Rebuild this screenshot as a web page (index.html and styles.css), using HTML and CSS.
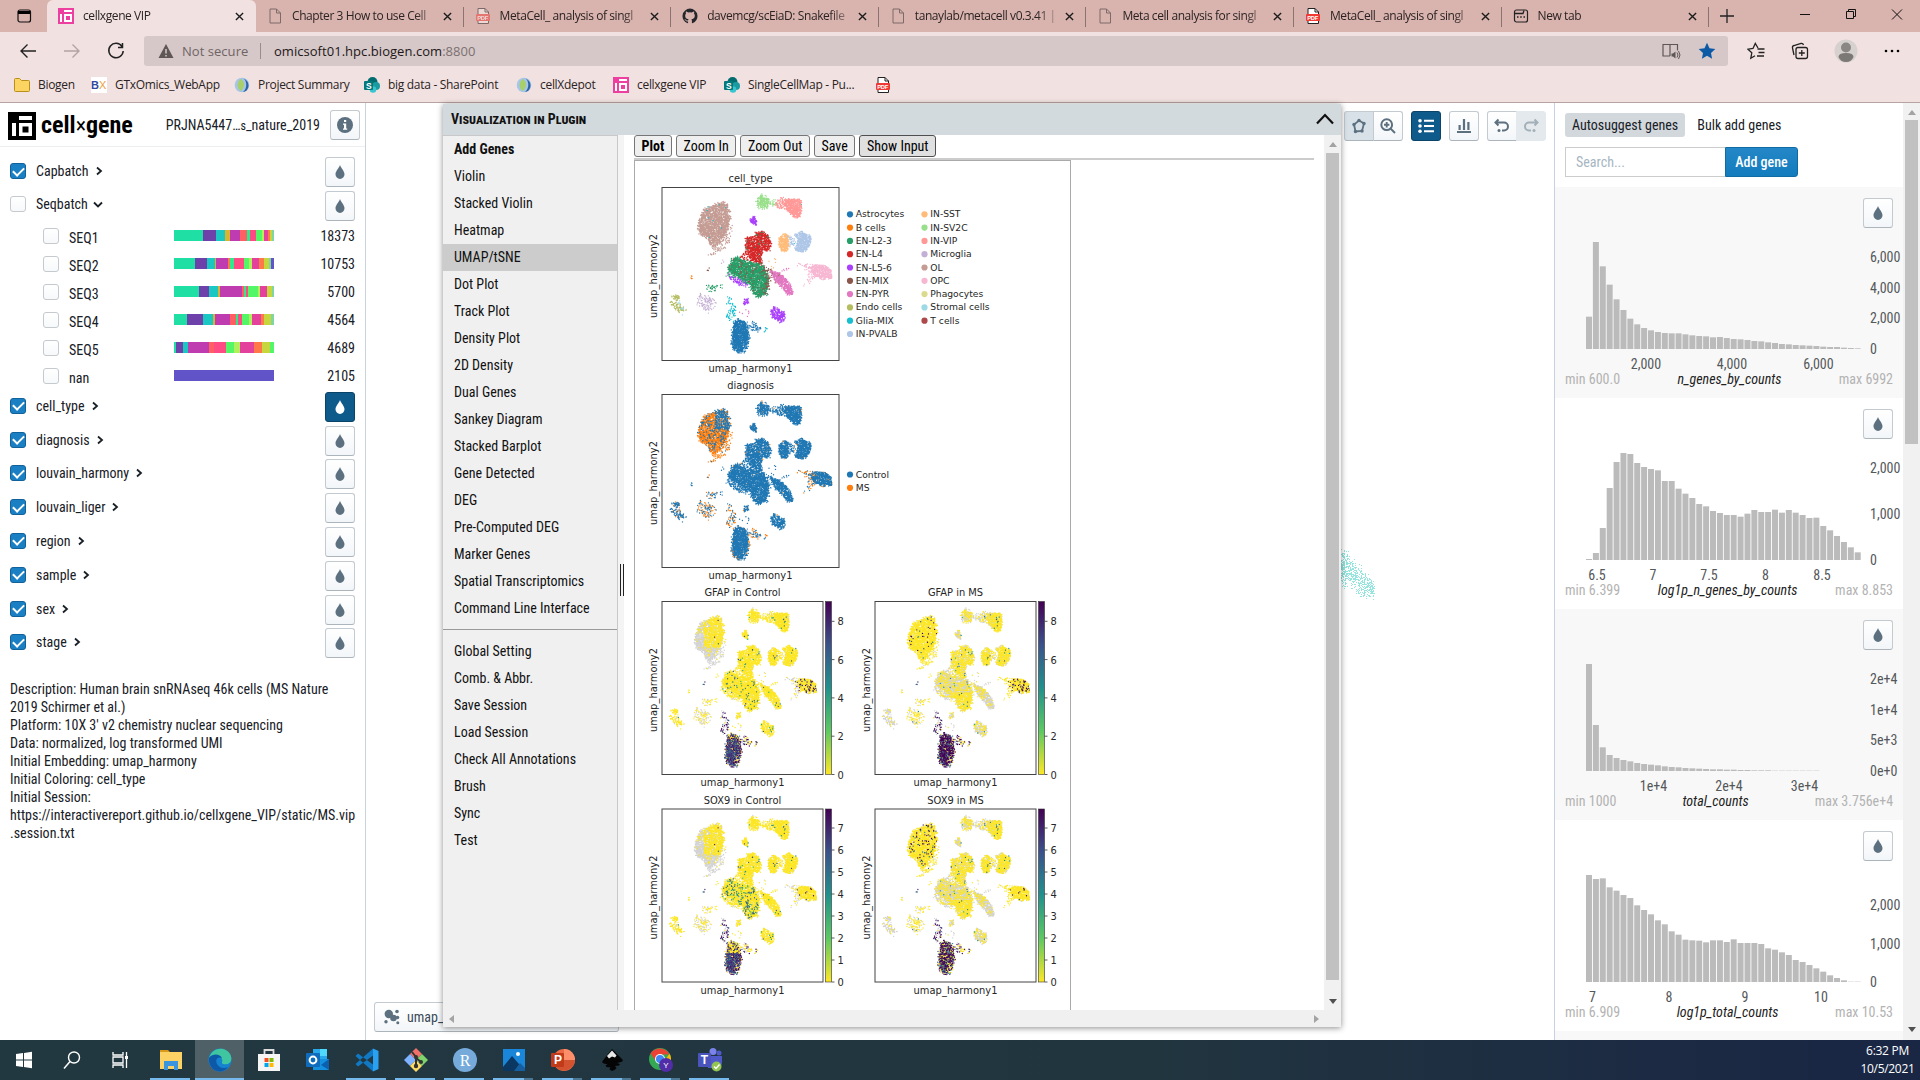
FILE: index.html
```html
<!DOCTYPE html>
<html lang="en">
<head>
<meta charset="utf-8">
<title>cellxgene VIP</title>
<link rel="stylesheet" href="styles.css">
</head>
<body>
<svg class="defs" aria-hidden="true">
  <symbol id="close" viewBox="0 0 10 10"><path d="M1 1l8 8M9 1l-8 8" stroke="#1b1b1b" stroke-width="1.500" fill="none"/></symbol>
  <symbol id="page" viewBox="0 0 16 16"><path d="M3 1h6.500l4 4v10h-10.500zM9.500 1v4h4" stroke="#7d6b69" fill="none"/></symbol>
  <symbol id="pdf" viewBox="0 0 16 16"><path d="M3 .5h7l3.500 3.500v11.500h-10.500z" fill="#fff" stroke="#222"/><path d="M10 .5v3.500h3.500" fill="none" stroke="#222"/><rect x="1" y="6" width="14" height="7" rx="1" fill="#ef3a35"/><text x="2.200" y="11.700" font-size="5.800" font-weight="700" fill="#fff" font-family="Liberation Sans, sans-serif">PDF</text></symbol>
  <symbol id="vip" viewBox="0 0 16 16"><path fill="#ec3fa0" d="M0 0h16v16h-16z"/><path fill="#fff" d="M2 6h2v8h-2zM6 2h8v2h-8zM6 6h8v8h-8z"/><path fill="#ec3fa0" d="M8 8h4v4h-4z"/></symbol>
  <symbol id="globe" viewBox="0 0 16 16"><circle cx="8" cy="8" r="7.300" fill="#a5c6e6"/><path d="M8 1c5 1 6 10 1 14 7-1 8-12-1-14z" fill="#2d62a3"/><path d="M7 2c4 3 4 8 0 12-4-2-5-9 0-12z" fill="#a9cf6b"/></symbol>
  <symbol id="share" viewBox="0 0 16 16"><circle cx="8.500" cy="5" r="5" fill="#036c70"/><circle cx="12" cy="9" r="4" fill="#1a9ba1"/><circle cx="9" cy="12.500" r="3.300" fill="#37c6d0"/><rect y="4" width="9" height="9" rx="1" fill="#03787c"/><text x="2" y="11.500" font-size="8.500" font-weight="700" fill="#fff" font-family="Liberation Sans, sans-serif">S</text></symbol>
  <symbol id="tint" viewBox="0 0 16 16"><path d="M8 1C7 4 3.500 7 3.500 10.300a4.500 4.700 0 0 0 9 0C12.500 7 9 4 8 1z"/></symbol>
  <symbol id="right" viewBox="0 0 16 16"><path d="M6 4.500l4 3.500-4 3.500" stroke="#182026" stroke-width="1.800" fill="none"/></symbol>
  <symbol id="down" viewBox="0 0 16 16"><path d="M4 6.500l4 4 4-4" stroke="#182026" stroke-width="1.800" fill="none"/></symbol>
</svg>

<header class="browser">
  <div class="tabs">
    <div class="tab-menu"><svg width="16" height="16" viewBox="0 0 16 16"><rect x="2" y="2" width="12.500" height="12" rx="2" fill="none" stroke="#111" stroke-width="1.200"/><path d="M2 3h12v3h-12z"/></svg></div>
    <div class="tab active"><svg class="ico"><use href="#vip"/></svg><span>cellxgene VIP</span><svg class="x"><use href="#close"/></svg></div>
    <div class="tab"><svg class="ico"><use href="#page"/></svg><span>Chapter 3 How to use Cell</span><svg class="x"><use href="#close"/></svg></div>
    <div class="tab"><svg class="ico faded"><use href="#pdf"/></svg><span>MetaCell_ analysis of singl</span><svg class="x"><use href="#close"/></svg></div>
    <div class="tab"><svg class="ico" viewBox="0 0 16 16"><path d="M8 .6a7.500 7.500 0 0 0-2.400 14.600c.4 0 .5-.2.500-.4v-1.400c-2 .5-2.500-.9-2.500-.9-.4-.9-.9-1.100-.9-1.100-.7-.5 0-.5 0-.5.8 0 1.200.8 1.200.8.700 1.200 1.800.8 2.200.6 0-.5.300-.8.500-1-1.700-.2-3.400-.8-3.400-3.700 0-.8.300-1.500.8-2-.1-.2-.4-1 0-2 0 0 .7-.2 2.100.8a7 7 0 0 1 3.800 0c1.500-1 2.100-.8 2.100-.8.4 1 .1 1.800 0 2 .5.500.8 1.200.8 2 0 2.900-1.800 3.500-3.400 3.700.3.300.5.700.5 1.400v2.100c0 .2.100.5.500.4A7.500 7.500 0 0 0 8 .6z" fill="#24262a"/></svg><span>davemcg/scEiaD: Snakefile</span><svg class="x"><use href="#close"/></svg></div>
    <div class="tab"><svg class="ico"><use href="#page"/></svg><span>tanaylab/metacell v0.3.41 |</span><svg class="x"><use href="#close"/></svg></div>
    <div class="tab"><svg class="ico"><use href="#page"/></svg><span>Meta cell analysis for singl</span><svg class="x"><use href="#close"/></svg></div>
    <div class="tab"><svg class="ico"><use href="#pdf"/></svg><span>MetaCell_ analysis of singl</span><svg class="x"><use href="#close"/></svg></div>
    <div class="tab last"><svg class="ico" viewBox="0 0 16 16"><rect x="1.500" y="2" width="13" height="12" rx="2" fill="none" stroke="#222" stroke-width="1.200"/><path d="M2 5.500h8l1-3M4 9h1.500M7.200 9h1.500M10.500 9h1.500" stroke="#222" stroke-width="1.300" fill="none"/></svg><span>New tab</span><svg class="x"><use href="#close"/></svg></div>
    <svg class="plus" width="16" height="16" viewBox="0 0 16 16"><path d="M8 1v14M1 8h14" stroke="#222" stroke-width="1.300"/></svg>
    <div class="win">
      <svg width="46" height="32" viewBox="0 0 46 32"><path d="M18 14.500h10" stroke="#111"/></svg>
      <svg width="46" height="32" viewBox="0 0 46 32"><path d="M18.500 11.500h7v7h-7zM20.500 11.500v-2h7v7h-2" fill="none" stroke="#111"/></svg>
      <svg width="46" height="32" viewBox="0 0 46 32"><path d="M18 9.500l10 10M28 9.500l-10 10" fill="none" stroke="#111"/></svg>
    </div>
  </div>
  <div class="toolbar">
    <div class="nav">
      <svg width="18" height="18" viewBox="0 0 18 18"><path d="M17 9h-15M8.500 2.500l-6.500 6.500 6.500 6.500" fill="none" stroke="#222" stroke-width="1.400"/></svg>
      <svg width="18" height="18" viewBox="0 0 18 18"><path d="M1 9h15M9.500 2.500l6.500 6.500-6.500 6.500" fill="none" stroke="#b3a3a2" stroke-width="1.400"/></svg>
      <svg width="18" height="18" viewBox="0 0 18 18"><path d="M15 4.500A7.200 7.200 0 1 0 16.200 9M15.500 1v4.500h-4.500" fill="none" stroke="#222" stroke-width="1.500"/></svg>
    </div>
    <div class="address">
      <svg width="16" height="16" viewBox="0 0 16 16"><path d="M8 1l7.500 14h-15z" fill="#5f5656"/><path d="M8 6v4.500M8 12v1.500" stroke="#d6c8c8" stroke-width="1.500"/></svg>
      <span class="insecure">Not secure</span><span class="url">omicsoft01.hpc.biogen.com<i>:8800</i></span>
      <svg class="reader" width="20" height="18" viewBox="0 0 20 18"><path d="M9 14h-7v-11.500h14.500v6M9 14v-11.500" fill="none" stroke="#5f5656" stroke-width="1.200"/><path d="M10.500 11.500h1.500l2.500-2v7l-2.500-2h-1.500z" fill="#5f5656"/><path d="M16 10.500q2 2.500 0 5M17.500 9q3 4 0 8" fill="none" stroke="#5f5656"/></svg>
      <svg width="18" height="18" viewBox="0 0 18 18"><path d="M9 .8l2.500 5.400 5.800.7-4.300 4 1.100 5.800-5.100-2.900-5.100 2.900 1.100-5.800-4.300-4 5.800-.7z" fill="#0c5aa6"/></svg>
    </div>
    <div class="actions">
      <svg width="18" height="18" viewBox="0 0 18 18"><path d="M11 6l-2.700-4.500-2.300 5-5 .7 3.800 3.600-1 5.500 4.200-2.500M10.500 7h7M11.500 10.500h6M10 14h7" fill="none" stroke="#222" stroke-width="1.300"/></svg>
      <svg width="18" height="18" viewBox="0 0 18 18"><rect x="5" y="5.500" width="11.500" height="11" rx="2" fill="none" stroke="#222" stroke-width="1.300"/><path d="M3 13l-1.500-7q-.5-2 1.500-2.500l7-2q2-.3 2.500 1.500M10.800 8v6M7.800 11h6" fill="none" stroke="#222" stroke-width="1.300"/></svg>
      <svg width="24" height="24" viewBox="0 0 24 24"><circle cx="12" cy="12" r="11.500" fill="#d6d1cf"/><circle cx="12" cy="8.500" r="5" fill="#8a8785"/><path d="M4.500 18q0-4 7.500-4t7.500 4q-2 5-7.500 5t-7.500-5" fill="#7b7876"/></svg>
      <svg width="18" height="18" viewBox="0 0 18 18"><circle cx="3" cy="9" r="1.300"/><circle cx="9" cy="9" r="1.300"/><circle cx="15" cy="9" r="1.300"/></svg>
    </div>
  </div>
  <nav class="bookmarks">
    <a><svg class="ico" viewBox="0 0 16 16"><path d="M.5 2.500q0-1 1-1h4l2 2h7q1 0 1 1v9q0 1-1 1h-13q-1 0-1-1z" fill="#fcd462" stroke="#b98e1b"/></svg>Biogen</a>
    <a><svg class="ico" viewBox="0 0 16 16"><path fill="#fff" d="M0 0h16v16h-16z"/><text x="0" y="12" font-size="11" font-weight="700" fill="#2f4aa0" font-family="Liberation Sans, sans-serif">B</text><text x="8" y="12" font-size="11" fill="#e9a13b" font-family="Liberation Sans, sans-serif">X</text></svg>GTxOmics_WebApp</a>
    <a><svg class="ico"><use href="#globe"/></svg>Project Summary</a>
    <a><svg class="ico"><use href="#share"/></svg>big data - SharePoint</a>
    <a><svg class="ico"><use href="#globe"/></svg>cellXdepot</a>
    <a><svg class="ico"><use href="#vip"/></svg>cellxgene VIP</a>
    <a><svg class="ico"><use href="#share"/></svg>SingleCellMap - Pu...</a>
    <a><svg class="ico"><use href="#pdf"/></svg></a>
  </nav>
</header>

<main class="app">
  <aside class="left">
    <div class="brand">
      <svg width="28" height="28" viewBox="0 0 28 28"><path d="M0 0h28v28h-28z"/><path fill="#fff" d="M4 11h4v13h-4zM11 4h13v4h-13zM11 11h13v13h-13z"/><path d="M14.500 14.500h6v6h-6z"/></svg>
      <strong>cell<span>×</span>gene</strong>
      <span class="dataset">PRJNA5447…<small>s</small>_nature_2019</span>
      <button class="btn info"><svg width="16" height="16" viewBox="0 0 16 16"><circle cx="8" cy="8" r="8" fill="#5c7080"/><path d="M7 3h2.200v2h-2.200zM6 6.500h3.200v5h1v1.300h-4.200v-1.300h1v-3.700h-1z" fill="#fff"/></svg></button>
    </div>
    <div class="cat"><i class="box on"></i><span>Capbatch</span><svg class="ico"><use href="#right"/></svg><button class="btn"><svg class="ico"><use href="#tint"/></svg></button></div>
    <div class="cat open"><i class="box"></i><span>Seqbatch</span><svg class="ico"><use href="#down"/></svg><button class="btn"><svg class="ico"><use href="#tint"/></svg></button></div>
    <div class="values">
      <div class="val"><i class="box"></i><span>SEQ1</span><div class="stack"></div><b>18373</b></div>
      <div class="val"><i class="box"></i><span>SEQ2</span><div class="stack"></div><b>10753</b></div>
      <div class="val"><i class="box"></i><span>SEQ3</span><div class="stack"></div><b>5700</b></div>
      <div class="val"><i class="box"></i><span>SEQ4</span><div class="stack"></div><b>4564</b></div>
      <div class="val"><i class="box"></i><span>SEQ5</span><div class="stack"></div><b>4689</b></div>
      <div class="val"><i class="box"></i><span>nan</span><div class="stack"></div><b>2105</b></div>
    </div>
    <div class="cat"><i class="box on"></i><span>cell_type</span><svg class="ico"><use href="#right"/></svg><button class="btn primary"><svg class="ico"><use href="#tint"/></svg></button></div>
    <div class="cat"><i class="box on"></i><span>diagnosis</span><svg class="ico"><use href="#right"/></svg><button class="btn"><svg class="ico"><use href="#tint"/></svg></button></div>
    <div class="cat"><i class="box on"></i><span>louvain_harmony</span><svg class="ico"><use href="#right"/></svg><button class="btn"><svg class="ico"><use href="#tint"/></svg></button></div>
    <div class="cat"><i class="box on"></i><span>louvain_liger</span><svg class="ico"><use href="#right"/></svg><button class="btn"><svg class="ico"><use href="#tint"/></svg></button></div>
    <div class="cat"><i class="box on"></i><span>region</span><svg class="ico"><use href="#right"/></svg><button class="btn"><svg class="ico"><use href="#tint"/></svg></button></div>
    <div class="cat"><i class="box on"></i><span>sample</span><svg class="ico"><use href="#right"/></svg><button class="btn"><svg class="ico"><use href="#tint"/></svg></button></div>
    <div class="cat"><i class="box on"></i><span>sex</span><svg class="ico"><use href="#right"/></svg><button class="btn"><svg class="ico"><use href="#tint"/></svg></button></div>
    <div class="cat"><i class="box on"></i><span>stage</span><svg class="ico"><use href="#right"/></svg><button class="btn"><svg class="ico"><use href="#tint"/></svg></button></div>
    <p class="about">Description: Human brain snRNAseq 46k cells (MS Nature<br>2019 Schirmer et al.)<br>Platform: 10X 3' v2 chemistry nuclear sequencing<br>Data: normalized, log transformed UMI<br>Initial Embedding: umap_harmony<br>Initial Coloring: cell_type<br>Initial Session:<br>https://interactivereport.github.io/cellxgene_VIP/static/MS.vip<br>.session.txt</p>
  </aside>

  <section class="center">
    <div class="tools">
      <div class="group"><button class="btn pressed"><svg class="ico" viewBox="0 0 16 16"><path d="M8 2.500l5 3-2 7.500-6.500.5-1.500-7z" fill="none" stroke="#5c7080" stroke-width="1.800"/><g fill="#5c7080"><circle cx="8" cy="2.500" r="1.700"/><circle cx="13" cy="5.500" r="1.700"/><circle cx="11" cy="13" r="1.700"/><circle cx="4.500" cy="13.500" r="1.700"/><circle cx="3" cy="6.500" r="1.700"/></g></svg></button><button class="btn"><svg class="ico" viewBox="0 0 16 16"><circle cx="6.700" cy="6.700" r="5.400" fill="none" stroke="#5c7080" stroke-width="2"/><path d="M10.500 10.500l4.500 4.500M4 6.700h5.400M6.700 4v5.400" stroke="#5c7080" stroke-width="1.900"/></svg></button></div>
      <button class="btn primary"><svg class="ico" viewBox="0 0 16 16"><g><circle cx="2" cy="2.800" r="1.800"/><circle cx="2" cy="8" r="1.800"/><circle cx="2" cy="13.200" r="1.800"/><path d="M6 1.800h10v2h-10zM6 7h10v2h-10zM6 12.200h10v2h-10z"/></g></svg></button>
      <button class="btn"><svg class="ico" viewBox="0 0 16 16"><path d="M1 13h14v2h-14zM2.500 7h2.200v5h-2.200zM6.900 1h2.200v11h-2.200zM11.300 4h2.200v8h-2.200z"/></svg></button>
      <div class="group"><button class="btn"><svg class="ico" viewBox="0 0 16 16"><path d="M4.500 1.500l-3 3 3 3M1.500 4.500h8.500a4 4 0 0 1 0 8h-2" fill="none" stroke="#5c7080" stroke-width="2"/><circle cx="5" cy="12.500" r="1.500"/></svg></button><button class="btn off"><svg class="ico" viewBox="0 0 16 16"><path d="M11.500 1.500l3 3-3 3M14.500 4.500h-8.500a4 4 0 0 0 0 8h2" fill="none" stroke="#a3b0b9" stroke-width="2"/><circle cx="11" cy="12.500" r="1.500" fill="#a3b0b9"/></svg></button></div>
    </div>
    <svg class="cells" id="cells" width="40" height="64" viewBox="0 0 40 64"></svg>
    <button class="btn embedding"><svg class="ico" viewBox="0 0 16 16"><circle cx="4.800" cy="5" r="4.200"/><circle cx="9.500" cy="9" r="3.300"/><circle cx="13" cy="2.500" r="1.800"/><circle cx="13.500" cy="8.500" r="1.800"/><circle cx="2" cy="12.700" r="1.700"/><circle cx="13.800" cy="13.800" r="1.500"/></svg>umap_</button>

    <div class="plugin">
      <div class="plugin-head">Visualization in Plugin<svg width="20" height="14" viewBox="0 0 20 14"><path d="M2 11.500l8-8.500 8 8.500" fill="none" stroke="#111" stroke-width="2.200"/></svg></div>
      <div class="plugin-body">
        <ul class="menu">
          <li class="bold">Add Genes</li><li>Violin</li><li>Stacked Violin</li><li>Heatmap</li><li class="sel">UMAP/tSNE</li><li>Dot Plot</li><li>Track Plot</li><li>Density Plot</li><li>2D Density</li><li>Dual Genes</li><li>Sankey Diagram</li><li>Stacked Barplot</li><li>Gene Detected</li><li>DEG</li><li>Pre-Computed DEG</li><li>Marker Genes</li><li>Spatial Transcriptomics</li><li>Command Line Interface</li>
          <li class="rule"></li>
          <li>Global Setting</li><li>Comb. &amp; Abbr.</li><li>Save Session</li><li>Load Session</li><li>Check All Annotations</li><li>Brush</li><li>Sync</li><li>Test</li>
        </ul>
        <div class="split"><i></i></div>
        <div class="result">
          <div class="plot-bar"><button class="bold">Plot</button><button>Zoom In</button><button>Zoom Out</button><button>Save</button><button class="hover">Show Input</button></div>
          <div class="figure"><svg id="figure" width="435" height="850" viewBox="635.500 161 435 850"><defs><linearGradient id="viridis" x1="0" y1="0" x2="0" y2="1"><stop offset="0" stop-color="#440154"/><stop offset=".25" stop-color="#3b528b"/><stop offset=".5" stop-color="#21918c"/><stop offset=".75" stop-color="#5ec962"/><stop offset="1" stop-color="#fde725"/></linearGradient></defs></svg></div>
        </div>
        <div class="vbar"><i class="up"></i><div></div><i class="dn"></i></div>
      </div>
      <div class="hbar"><i class="lf"></i><i class="rt"></i></div>
    </div>
  </section>

  <aside class="right">
    <div class="genes">
      <div class="gene-tabs"><span class="on">Autosuggest genes</span><span>Bulk add genes</span></div>
      <div class="search"><span>Search...</span><button>Add gene</button></div>
      <div id="histograms"></div>
    </div>
    <div class="scroll"><i class="up"></i><div></div><i class="dn"></i></div>
  </aside>
</main>

<footer class="taskbar">
  <div class="apps">
    <a><svg viewBox="0 0 24 24"><path fill="#fff" d="M4 6l7-1v6.500h-7zM12 4.900l8-1.100v7.700h-8zM4 12.500h7v6.500l-7-1zM12 12.500h8v7.700l-8-1.100z"/></svg></a>
    <a><svg viewBox="0 0 24 24"><circle cx="14" cy="9.500" r="5.500" fill="none" stroke="#fff" stroke-width="1.400"/><path d="M10 13.500l-6 7" stroke="#fff" stroke-width="1.500"/></svg></a>
    <a><svg viewBox="0 0 24 24"><path d="M5 4v3h10v-3M5 20v-3h10v3M5 9h10v6h-10zM18.500 4v16" fill="none" stroke="#fff" stroke-width="1.300"/><path fill="#fff" d="M17 8h3v3h-3z"/></svg></a>
    <a class="run"><svg viewBox="0 0 24 24"><path d="M1 2h8l2 2h-10z" fill="#d99a1c"/><path d="M1 4h22v17h-22z" fill="#fbd263"/><path d="M5 22v-9h14v9h-4v-4h-6v4z" fill="#3a94de"/></svg></a>
    <a class="run current"><svg viewBox="0 0 24 24"><circle cx="12" cy="12" r="11.500" fill="#1583cf"/><path d="M1 10C3 3 9 0 14 .8c6 1 10 6 9.300 10.700-.5 4-4 5.500-8 4.500-2-.6-1-2-1-3.500 0-3-4-6-8-5.500-2 .3-4 1.500-5.300 3" fill="#3fc6a0"/><path d="M1 10c4-5 11-4 13 0-5-2-7 2-5 6s7 5 11 3c-3 5-10 6-15 2-3-3-4.500-7-4-11" fill="#0e58a8"/></svg></a>
    <a><svg viewBox="0 0 24 24"><path d="M7.500 7v-5h9v5" fill="none" stroke="#ddd" stroke-width="1.800"/><path d="M1 6h22v17h-22z" fill="#f5f5f5"/><path fill="#f25022" d="M7.500 10h4v4h-4z"/><path fill="#7fba00" d="M12.500 10h4v4h-4z"/><path fill="#00a4ef" d="M7.500 15h4v4h-4z"/><path fill="#ffb900" d="M12.500 15h4v4h-4z"/></svg></a>
    <a><svg viewBox="0 0 24 24"><path d="M7 1h14v14h-14z" fill="#28a8ea"/><path d="M14 1h7v7h-7z" fill="#50d9ff"/><path d="M7 11l16 0v11h-16z" fill="#1490df"/><path d="M23 11l-8 6 8 5z" fill="#0a5fae"/><rect y="5" width="14" height="14" rx="1" fill="#0f6cbd"/><circle cx="7" cy="12" r="3.400" fill="none" stroke="#fff" stroke-width="2"/></svg></a>
    <a class="run"><svg viewBox="0 0 24 24"><path d="M18 .5l5.500 2.500v18l-5.500 2.500z" fill="#2ba0f0"/><path d="M18 .5v7l-15 11-2.500-2.500zM18 23.500v-7l-15-11-2.500 2.500z" fill="#1179c4"/></svg></a>
    <a class="run"><svg viewBox="0 0 24 24"><path d="M12 0l6 6-6 6-6-6z" fill="#f07068"/><path d="M18 6l6 6-6 6-6-6z" fill="#7ed36d"/><path d="M6 6l6 6-6 6-6-6z" fill="#80b3ff"/><path d="M12 12l6 6-6 6-6-6z" fill="#ffdc63"/><path d="M8 4l4 5v9M12 10l5 4" stroke="#333" stroke-width="2" fill="none"/><circle cx="12" cy="18" r="2.200" fill="#333"/><circle cx="17" cy="14" r="2" fill="#333"/><circle cx="12" cy="9" r="2" fill="#333"/></svg></a>
    <a class="run"><svg viewBox="0 0 24 24"><circle cx="12" cy="12" r="12" fill="#75aadb"/><text x="12" y="17.500" text-anchor="middle" font-size="16" fill="#fff" font-family="Liberation Serif, serif">R</text></svg></a>
    <a class="run multi"><svg viewBox="0 0 24 24"><path d="M1 1h22v22h-22z" fill="#1a86d9"/><path d="M1 19l9-11 13 15h-22z" fill="#0b3763"/><path d="M12 23l6-8 5 5v3z" fill="#155fa0"/><circle cx="16" cy="6" r="2" fill="#fff"/></svg></a>
    <a class="run multi"><svg viewBox="0 0 24 24"><circle cx="13" cy="12" r="11" fill="#ed6c47"/><path d="M13 1a11 11 0 0 1 11 11h-11z" fill="#ff8f6b"/><path d="M13 12h11a11 11 0 0 1-19 7z" fill="#d35230"/><rect y="5" width="13" height="14" rx="1" fill="#c13b1b"/><text x="3" y="16" font-size="12" font-weight="700" fill="#fff" font-family="Liberation Sans, sans-serif">P</text></svg></a>
    <a class="run multi"><svg viewBox="0 0 24 24"><path d="M12 1l10 10q2 2-1 3l-4 1 3 1-1 1.500-4 .5 1.500 2-2 2-2.500 1-2.500-1.500 1-2-4-.5-1-1.500 2-1-3.500-1q-3-1-1-3z" fill="#050505"/><path d="M12 2.500l4.500 5-1.500 2-3-1-3 2-2-2.500z" fill="#e8e8e8"/></svg></a>
    <a class="run multi"><svg viewBox="0 0 24 24"><circle cx="11" cy="11" r="11" fill="#34a853"/><path d="M20.500 5.500a11 11 0 0 1-9 16.500l4-9z" fill="#fbbc05"/><path d="M1.500 5.500l5.500 8 4-7h9.500a11 11 0 0 0-19-1z" fill="#ea4335"/><circle cx="11" cy="11" r="5" fill="#fff"/><circle cx="11" cy="11" r="4" fill="#4285f4"/><circle cx="17" cy="17" r="7" fill="#512da8"/><text x="17" y="20" text-anchor="middle" font-size="8" fill="#fff" font-family="Liberation Sans, sans-serif">Y</text></svg></a>
    <a class="run"><svg viewBox="0 0 24 24"><circle cx="15" cy="3.500" r="3.500" fill="#7b83eb"/><circle cx="21" cy="5" r="2.500" fill="#5059c9"/><path d="M10 8h14v7q-1 5-5 5h-9z" fill="#5059c9"/><rect y="5" width="13" height="14" rx="1" fill="#4b53bc"/><text x="2.800" y="16" font-size="12" font-weight="700" fill="#fff" font-family="Liberation Sans, sans-serif">T</text><circle cx="18.500" cy="18.500" r="5" fill="#92c353"/><path d="M16 18.500l2 2 3.500-4" stroke="#fff" stroke-width="1.400" fill="none"/></svg></a>
  </div>
  <div class="clock"><span>6:32 PM</span><span>10/5/2021</span></div>
</footer>
<script src="app.js"></script>
</body>
</html>
```
FILE: styles.css
```css
* { box-sizing: border-box; }
body { margin: 0; width: 1920px; height: 1080px; overflow: hidden; background: #fff; color: #182026; font: 14px/18px "Roboto Condensed", Roboto, sans-serif; }
button { font: inherit; padding: 0; margin: 0; }
.defs { display: none; }
.ico { width: 16px; height: 16px; flex: none; }
.bold { font-weight: 700; }

/* browser chrome */
.browser { height: 103px; background: #f1e2e1; border-bottom: 1px solid #b7a3a1; font: 12px/16px "Open Sans", sans-serif; letter-spacing: -.3px; color: #2b2323; }
.tabs { height: 32px; background: #d9b3ae; display: flex; align-items: center; }
.tab-menu { width: 47px; height: 32px; display: flex; align-items: center; justify-content: center; }
.tab { width: 207.600px; height: 32px; display: flex; align-items: center; gap: 9px; padding: 0 12px 0 11px; position: relative; }
.tab span { flex: 1; white-space: nowrap; margin-right: -8px; letter-spacing: -.42px; -webkit-mask-image: linear-gradient(90deg, #000 82%, rgba(0, 0, 0, .25) 95%); mask-image: linear-gradient(90deg, #000 82%, rgba(0, 0, 0, .25) 95%); }
.tab::after { content: ""; position: absolute; right: 0; top: 7px; height: 20px; width: 1px; background: #8c7370; }
.tab.active { width: 209px; background: #f1e2e1; border-radius: 6px 6px 0 0; }
.tab.active::after { display: none; }
.tab .x { width: 9px; height: 9px; }
.faded { opacity: .5; }
.plus { margin-left: 10px; }
.win { margin-left: auto; display: flex; }
.toolbar { height: 36px; display: flex; align-items: center; padding-top: 2px; }
.nav { width: 144px; display: flex; gap: 26px; padding-left: 19px; }
.address { width: 1584px; height: 30px; background: #d6c8c8; border-radius: 3px; display: flex; align-items: center; padding: 0 12px 0 14px; font-size: 13px; letter-spacing: .04px; }
.insecure { margin-left: 8px; width: 79px; border-right: 1px solid #9a8c8c; color: #6f6464; white-space: nowrap; }
.url { margin-left: 13px; color: #1d1717; }
.url i { font-style: normal; color: #7c7070; }
.reader { margin-left: auto; margin-right: 17px; }
.actions { flex: 1; display: flex; align-items: center; gap: 26px; padding-left: 19px; }
.actions svg:nth-child(3) { margin: 0 -1px; }
.bookmarks { height: 33px; padding-left: 14px; display: grid; grid-template-columns: 77px 143px 130px 152px 97px 111px 151px 30px; align-items: center; }
.bookmarks a { display: flex; align-items: center; gap: 8px; white-space: nowrap; }

/* shared controls */
.app { height: 937px; display: flex; }
.btn { width: 30px; height: 30px; flex: none; display: flex; align-items: center; justify-content: center; border: 1px solid #c3cad0; border-bottom-color: #adb5bc; border-radius: 3px; background: linear-gradient(#fff, #f3f6f9); fill: #5c7080; }
.btn.primary { background: #0e5a8a; border-color: #0b4469; fill: #fff; }
.btn.pressed { background: #d8e1e8; }
.btn.off { background: #e4e9ed; border-color: #e4e9ed; }
.box { width: 16px; height: 16px; flex: none; border: 1px solid #c5cacf; border-radius: 3px; background: linear-gradient(#fff, #f6f8fa); }
.box.on { background: #1b7fc3; border-color: #11619b; display: flex; align-items: center; justify-content: center; }
.box.on::after { content: ""; width: 9px; height: 5px; border: solid #fff; border-width: 0 0 2px 2px; transform: translateY(-1px) rotate(-45deg); }

/* left panel */
.left { width: 366px; border-right: 1px solid #c8d3de; flex: none; }
.brand { height: 44px; margin-bottom: 10px; border-bottom: 1px solid #eceff1; display: flex; align-items: center; padding: 2px 5px 0 8px; }
.brand strong { width: 96px; margin-left: 5px; font-size: 24px; color: #000; white-space: nowrap; }
.brand strong span { font-weight: 400; font-size: 22px; }
.dataset { margin-left: auto; margin-right: 10px; }
.dataset small { font-size: 12px; }
.brand .btn { margin-top: -2px; }
.cat { height: 33.800px; padding: 0 10px; display: flex; align-items: flex-start; }
.cat .box { margin-top: 6px; }
.cat > span { margin: 5px 2px 0 10px; }
.cat > .ico { margin-top: 6px; }
.cat .btn { margin-left: auto; }
.cat.open { height: 31px; }
.cat.open .box, .cat.open > .ico { margin-top: 5px; }
.cat.open > span { margin-top: 4px; }
.values { padding-bottom: 2px; }
.val { height: 28px; display: grid; grid-template-columns: 26px 105px 100px 1fr; align-items: center; padding: 0 10px 0 43px; }
.val span { padding-top: 4px; }
.val b { font-weight: 400; text-align: right; }
.stack { height: 11px; display: flex; }
.stack i { height: 11px; flex-shrink: 1; }
.stack i:last-child { flex-grow: 1; }
.about { margin: 17.500px 0 0 10px; white-space: nowrap; }

/* centre */
.center { flex: 1; position: relative; }
.tools { display: flex; justify-content: flex-end; gap: 8px; padding: 8px 8px 0 0; }
.group { display: flex; }
.group .btn:first-child { border-radius: 3px 0 0 3px; }
.group .btn:last-child { border-radius: 0 3px 3px 0; margin-left: -1px; }
.cells { position: absolute; left: 975px; top: 434px; }
.embedding { position: absolute; left: 8px; top: 899px; width: 245px; justify-content: flex-start; gap: 7px; padding-left: 9px; color: #394b59; }
.plugin { position: absolute; left: 77px; top: 1px; width: 898px; height: 923px; background: #fff; box-shadow: 0 1px 6px rgba(0, 0, 0, .45); display: flex; flex-direction: column; color: #111; }
.plugin-head { height: 31px; background: #d3dade; display: flex; align-items: center; justify-content: space-between; padding: 0 6px 1px 8px; font-weight: 700; font-variant: small-caps; font-size: 14px; }
.plugin-body { height: 875px; display: flex; }
.menu { width: 175px; margin: 0; padding: 0; list-style: none; background: #f0f0f0; border: 1px solid #c8c8c8; border-width: 1px 1px 0 0; }
.menu li { height: 27px; line-height: 27px; padding-left: 11px; }
.menu .sel { background: #ccc; }
.menu .rule { height: 1px; background: #999; margin: 7px 0 7.500px; }
.split { width: 6px; background: #f4f4f4; display: flex; align-items: center; }
.split i { width: 5px; height: 32px; margin: 15px 0 0 2px; border: solid #222; border-width: 0 1px; }
.result { width: 700px; padding-left: 10px; }
.plot-bar { width: 680px; height: 25px; border-bottom: 2px solid #ccc; display: flex; gap: 4px; }
.plot-bar button { height: 22px; border: 1px solid #767676; border-radius: 3px; background: #efefef; padding: 0 6.600px; line-height: 19px; color: #000; }
.plot-bar .hover { background: #e0e0e0; border-color: #4f4f4f; }
.figure { width: 437px; height: 850px; border: solid #aaa; border-width: 1px 1px 0; overflow: hidden; }
.figure svg { display: block; font: 9.200px "DejaVu Sans", sans-serif; fill: #262626; }
.figure .frame { fill: none; stroke: #444; }
.figure .mid { text-anchor: middle; font-size: 9.900px; }
.figure .tick { font-size: 9.900px; }
.vbar { width: 17px; background: #f1f1f1; margin-left: auto; display: flex; flex-direction: column; align-items: center; }
.vbar div { width: 13px; height: 827px; background: #c1c1c1; margin-top: 6px; }
.hbar { height: 17px; background: #f0f0f0; display: flex; justify-content: space-between; align-items: center; padding: 0 22px 0 6px; }
.up, .dn { border: solid transparent; border-width: 0 4px; }
.up { border-bottom: 5px solid #a3a3a3; margin-top: 7px; }
.dn { border-top: 5px solid #505050; margin-top: 19px; }
.lf, .rt { border: solid transparent; border-width: 4px 0; }
.lf { border-right: 5px solid #a3a3a3; }
.rt { border-left: 5px solid #a3a3a3; }

/* right panel */
.right { width: 366px; flex: none; border-left: 1px solid #c4d3df; display: flex; }
.genes { width: 349px; height: 937px; overflow: hidden; }
.gene-tabs { height: 44px; padding: 8px 10px; display: flex; }
.gene-tabs span { height: 28px; line-height: 28px; padding: 0 7px; margin-right: 5px; border-radius: 3px; }
.gene-tabs .on { background: #d3d8dd; height: 24px; line-height: 24px; margin-top: 2px; }
.search { height: 30px; display: flex; margin: 0 10px 10px; }
.search span { width: 160px; border: 1px solid #ccc; border-right: 0; line-height: 28px; padding-left: 10px; color: #a7b6c2; }
.search button { width: 73px; border: 1px solid #106ba3; border-radius: 0 3px 3px 0; background: linear-gradient(#2487c7, #137cbd); color: #fff; font-weight: 500; }
.histogram { height: 211px; display: flex; flex-direction: column; align-items: flex-end; padding: 11px 10px 0; }
.histogram:nth-child(odd) { background: #f8f8f8; }
.histogram svg.chart { width: 338px; height: 142px; flex: none; overflow: visible; margin-right: -10px; font-size: 14px; fill: #55585b; }
.caption { width: 328px; display: flex; justify-content: space-between; color: #b3b3b3; }
.caption em { color: #222; }
.scroll { width: 17px; background: #f1f1f1; display: flex; flex-direction: column; align-items: center; }
.scroll div { width: 13px; height: 324px; background: #c1c1c1; margin-top: 5px; }
.scroll .dn { margin-top: auto; margin-bottom: 8px; }

/* taskbar */
.taskbar { height: 40px; background: linear-gradient(90deg, #223841 0, #21353f 60%, #1a2744 95%); display: flex; justify-content: space-between; color: #fff; }
.apps { display: flex; }
.apps a { width: 49px; height: 40px; display: flex; align-items: center; justify-content: center; position: relative; }
.apps a svg { width: 24px; height: 24px; }
.apps a:nth-child(-n+3) { width: 48px; }
.apps a:nth-child(3) { margin-right: 2px; }
.run::after { content: ""; position: absolute; left: 4px; right: 5px; bottom: 0; height: 2px; background: #76b9ed; }
.multi::after { background: linear-gradient(90deg, #76b9ed 78%, #4c7793 78%); }
.current { background: #4f6067; }
.current::after { left: 0; right: 0; }
.clock { width: 65px; font: 12px/18px "Open Sans", sans-serif; letter-spacing: -.3px; display: flex; flex-direction: column; align-items: center; padding: 2px 0 0; }
```
FILE: app.js
```js
const NS = 'http://www.w3.org/2000/svg';
function add(parent, tag, attrs, text) {
  const el = document.createElementNS(NS, tag);
  for (const k in attrs) el.setAttribute(k, attrs[k]);
  if (text !== undefined) el.textContent = text;
  parent.appendChild(el);
  return el;
}
function random(seed) {
  return () => {
    seed = (seed + 0x6D2B79F5) | 0;
    let t = Math.imul(seed ^ (seed >>> 15), 1 | seed);
    t = (t + Math.imul(t ^ (t >>> 7), 61 | t)) ^ t;
    return ((t ^ (t >>> 14)) >>> 0) / 4294967296;
  };
}

/* Category composition bars: [colour, width] */
const C = { t: '#1fdfa4', p: '#6e40aa', c: '#1ac7c2', y: '#d8b52f', m: '#be3caf', r: '#ff5e63', e: '#2eea8c', k: '#fe4b83', g: '#52f667', l: '#aff05b', n: '#e4419d', o: '#ff7847', v: '#c6d63c', z: '#7fd6a0', b: '#6054c8' };
const stacks = [
  't29.300 p12.300 c9.300 y5 m10.600 r6.700 e3.300 k5.600 g6 l1.700 n4.700 o1.700 v1.500 z2.300',
  't21 p12 c7.500 y1.500 m11.500 o2 e4.500 k10 g4.500 l3.500 n7 o5 v5 z1.500 b2',
  't24.500 p10.500 c9 y1.500 m22 r2 e2 k2 g10 l2 n7 v5 z2.500',
  't12.700 p16.600 c10 y1.500 m15 r6 e2 k4 g7.500 l3 n8.500 o3 v7 z3',
  't2 p7 c5 m21 r5 k11.500 g8 l6.500 n14 o8 v8 g4',
  'b100'
];
document.querySelectorAll('.stack').forEach((el, i) => {
  stacks[i].split(' ').forEach(s => {
    const seg = document.createElement('i');
    seg.style.background = C[s[0]];
    seg.style.width = s.slice(1) + '%';
    el.appendChild(seg);
  });
});

/* Clusters: name, colour, outline, density, scatter */
const clusters = [
  ['OL', '#c49c94', '240,205 252,178 275,167 300,158 320,158 328,180 328,210 322,240 312,258 298,275 284,292 272,285 262,262 246,255 235,235', 1.35, 3],
  ['OL', '#c49c94', '318,190 338,205 334,262 318,290 285,312 268,320 285,290 310,250', .35, 4],
  ['SV', '#98df8a', '412,150 420,137 440,137 448,155 444,170 428,176 414,170', 1.2, 3],
  ['SV', '#98df8a', '445,150 472,152 472,168 448,168', .5, 3],
  ['VIP', '#ff9896', '468,155 488,140 500,147 500,178 482,176 470,170', .9, 3],
  ['VIP', '#ff9896', '498,148 542,146 547,175 538,205 518,198 500,180', 1.7, 2],
  ['L56', '#aa40fc', '390,208 402,194 412,215 410,226 392,216', 1.3, 1],
  ['L4', '#d62728', '378,264 395,258 410,262 408,246 425,243 446,258 453,278 448,298 426,304 424,345 410,338 390,312 378,300', 1.4, 3],
  ['L4', '#d62728', '378,300 405,318 425,345 370,335 362,320', .55, 6],
  ['SST', '#ffbb78', '480,262 494,250 506,254 508,285 500,304 484,302 477,280', 1.5, 2],
  ['PV', '#aec7e8', '535,262 552,248 572,258 574,278 560,298 542,307 526,298 532,280', 1.6, 2],
  ['PV', '#aec7e8', '524,252 545,243 552,248 530,262', 1.4, 1],
  ['PV', '#aec7e8', '506,255 520,262 528,290 508,290', .6, 4],
  ['L23', '#279e68', '326,350 340,326 352,320 368,330 400,338 428,346 442,370 446,400 438,432 416,443 398,424 386,400 368,390 345,376', 1.5, 3],
  ['L23', '#279e68', '318,362 332,345 352,325 345,378 325,380', .6, 4],
  ['L56', '#aa40fc', '322,368 336,378 360,382 382,392 382,408 354,402 334,392', .8, 3],
  ['MIX', '#8c564b', '426,345 444,352 452,385 444,425 434,430 440,390', .45, 5],
  ['MIX', '#8c564b', '446,355 482,372 488,400 470,396 450,380', .45, 4],
  ['PYR', '#e377c2', '452,362 476,368 500,386 514,410 520,432 506,436 488,414 466,392', 1.35, 2],
  ['OPC', '#f7b6d2', '570,350 590,344 612,344 632,358 636,384 606,388 582,378', 1.4, 2],
  ['OPC', '#f7b6d2', '524,333 552,342 580,345 585,378 566,404 556,404 570,374 550,350', .4, 4],
  ['END', '#b5bd61', '155,438 180,434 178,448 162,448', 1.1, 2],
  ['END', '#b5bd61', '150,458 170,455 196,480 176,486', .9, 4],
  ['END', '#9edae5', '170,450 205,485 188,490', .25, 4],
  ['MG', '#c5b0d5', '236,430 262,438 284,452 284,468 262,480 242,474 234,456', .5, 6],
  ['MG', '#279e68', '255,412 295,402 306,405 300,414 262,422', .5, 5],
  ['GX', '#17becf', '322,440 338,442 346,490 338,512 322,510', .38, 6],
  ['L56', '#aa40fc', '372,450 384,444 388,460 374,464', 1.1, 2],
  ['L56', '#aa40fc', '452,482 464,468 494,486 496,512 480,517 456,500', 1.05, 2],
  ['AS', '#1f77b4', '342,520 358,510 376,518 386,550 384,578 374,600 358,606 344,596 338,560', 1.9, 4],
  ['AS', '#1f77b4', '374,522 402,516 418,530 418,544 396,540', .6, 4],
  ['AS', '#1f77b4', '334,582 345,580 345,592 334,590', .9, 3],
  ['AS', '#17becf', '434,535 440,535 440,546 433,545', .9, 2],
  ['MIX', '#ff7f0e', '212,375 216,374 216,386 213,388', .9, 2],
  ['GX', '#8c564b', '258,362 268,350 266,365', .5, 3],
  ['PYR', '#e377c2', '365,485 390,478 384,502', .2, 6],
  ['MG', '#c5b0d5', '300,315 312,330 308,340', .2, 6],
  ['MIX', '#ffbb78', '445,345 470,320 458,350', .25, 6],
  ['PYR', '#e377c2', '485,365 505,345 505,365', .25, 5]
];
const rnd = random(7);
const cells = [];
clusters.forEach(([name, colour, outline, density, jitter]) => {
  const p = outline.split(' ').map(q => q.split(',').map(Number));
  let area = 0;
  p.forEach((a, i) => { const b = p[(i + 1) % p.length]; area += a[0] * b[1] - b[0] * a[1]; });
  const n = Math.max(3, Math.round(Math.abs(area) / 18 * density * (density > .9 ? 1.45 : 1.1)));
  const xs = p.map(a => a[0]), ys = p.map(a => a[1]);
  const x0 = Math.min(...xs), x1 = Math.max(...xs), y0 = Math.min(...ys), y1 = Math.max(...ys);
  let made = 0;
  while (made < n) {
    const x = x0 + rnd() * (x1 - x0), y = y0 + rnd() * (y1 - y0);
    let inside = false;
    for (let i = 0, j = p.length - 1; i < p.length; j = i++) {
      if ((p[i][1] > y) !== (p[j][1] > y) && x < (p[j][0] - p[i][0]) * (y - p[i][1]) / (p[j][1] - p[i][1]) + p[i][0]) inside = !inside;
    }
    if (!inside) continue;
    made++;
    const j = () => (rnd() + rnd() + rnd() - 1.5) * jitter * 1.7;
    const px = x + j(), py = y + j();
    cells.push({ name, colour, x: (px - 126) / 532, y: (py - 112) / 519, rx: px, ry: py, a: rnd(), b: rnd(), c: rnd(), d: rnd() });
  }
});

const Y = '#fde725', G = '#d3d3d3', purple = ['#440154', '#472d7b', '#3b528b', '#440154', '#2c728e'], teal = ['#2c728e', '#21918c', '#28ae80', '#3b528b'];
const pick = (list, v) => list[Math.floor(v * list.length)];
const type = c => {
  if (c.name === 'L23' && c.a < .04) return '#8c564b';
  if (c.name === 'L4' && c.a < .02) return '#279e68';
  return c.a < .002 ? '#17becf' : c.colour;
};
const diagnosis = c => {
  const ms = { OL: c.rx > 285 && c.ry < 215 ? .4 : .88, MG: .5, GX: .5, AS: c.rx > 385 ? .65 : c.ry > 580 ? .25 : .08, OPC: c.rx < 585 ? .6 : .12, END: .2 }[c.name] || (c.ry < 345 ? .05 : .015);
  return c.a < ms ? '#ff7f0e' : '#1f77b4';
};
const expression = (gene, ms) => c => {
  const sox = gene === 'SOX9';
  if (c.name === 'AS') {
    const high = sox ? (ms ? .4 : c.ry > 545 ? .6 : .15) : (ms ? .6 : c.ry < 525 ? .3 : .6);
    if (c.a < high) return pick(purple, c.b);
    return c.c < .65 ? Y : G;
  }
  if (c.name === 'GX') return c.a < .4 ? pick(purple, c.b) : c.a < .5 ? Y : G;
  const grey = ms
    ? { OL: .07, SV: .6, VIP: c.rx > 515 ? .2 : .6, L56: .7, L4: .45, SST: .25, PV: .35, L23: c.ry > 385 ? .4 : .75, MIX: .5, PYR: .9, OPC: .08, END: .85, MG: .3 }[c.name]
    : { OL: c.rx > 285 && c.ry < 230 ? .25 : c.rx < 265 || c.ry > 250 ? .92 : .45, OPC: c.rx < 580 ? .6 : .12, MG: .5 }[c.name] || .1;
  if (c.a < grey) return G;
  let spot = ms ? .02 : .015;
  if (c.name === 'L23' && !ms) spot = sox ? .09 : .03;
  if (c.name === 'OPC' && !sox) spot = .09;
  if (c.name === 'OL') spot = ms ? (sox ? .045 : .014) : .003;
  return c.d < spot ? pick(c.name === 'OL' || c.name === 'OPC' ? purple : teal, c.b) : Y;
};

const fig = document.getElementById('figure');
function panel(x, y, w, h, title, colourOf) {
  const groups = {};
  const order = [G, Y];
  cells.forEach(c => {
    const col = colourOf(c);
    (groups[col] = groups[col] || []).push('M' + (x + c.x * w).toFixed(1) + ' ' + (y + c.y * h).toFixed(1) + 'h.01');
  });
  Object.keys(groups).sort((a, b) => (order.indexOf(a) + 1 || 9) - (order.indexOf(b) + 1 || 9)).forEach(col => {
    add(fig, 'path', { d: groups[col].join(''), stroke: col, 'stroke-width': 1.350, 'stroke-linecap': 'round', fill: 'none' });
  });
  add(fig, 'rect', { x, y, width: w, height: h, class: 'frame' });
  const cx = x + w / 2;
  add(fig, 'text', { x: cx, y: y - 5.500, class: 'mid' }, title);
  add(fig, 'text', { x: cx, y: y + h + 11.500, class: 'mid', textLength: 84 }, 'umap_harmony1');
  add(fig, 'text', { transform: `translate(${x - 5.500} ${y + h / 2 + 2}) rotate(-90)`, class: 'mid', textLength: 84 }, 'umap_harmony2');
}
function colourbar(x, y, h, labels, step) {
  add(fig, 'rect', { x, y, width: 6, height: h, fill: 'url(#viridis)', stroke: '#333', 'stroke-width': .6 });
  labels.forEach((t, i) => {
    const ty = y + h - i * step;
    add(fig, 'path', { d: `M${x + 6} ${ty}h3`, stroke: '#333', 'stroke-width': .8 });
    add(fig, 'text', { x: x + 12, y: ty + 4, class: 'tick' }, t);
  });
}
function legend(x, y, items) {
  items.forEach(([name, col], i) => {
    add(fig, 'circle', { cx: x, cy: y + i * 13.300, r: 3.100, fill: col });
    add(fig, 'text', { x: x + 5.800, y: y + i * 13.300 + 3 }, name);
  });
}
panel(662.500, 187.500, 177, 173, 'cell_type', type);
legend(850.500, 214.300, [['Astrocytes', '#1f77b4'], ['B cells', '#ff7f0e'], ['EN-L2-3', '#279e68'], ['EN-L4', '#d62728'], ['EN-L5-6', '#aa40fc'], ['EN-MIX', '#8c564b'], ['EN-PYR', '#e377c2'], ['Endo cells', '#b5bd61'], ['Glia-MIX', '#17becf'], ['IN-PVALB', '#aec7e8']]);
legend(925, 214.300, [['IN-SST', '#ffbb78'], ['IN-SV2C', '#98df8a'], ['IN-VIP', '#ff9896'], ['Microglia', '#c5b0d5'], ['OL', '#c49c94'], ['OPC', '#f7b6d2'], ['Phagocytes', '#dbdb8d'], ['Stromal cells', '#9edae5'], ['T cells', '#ad494a']]);
panel(662.500, 394.500, 177, 173, 'diagnosis', diagnosis);
legend(850.500, 474.500, [['Control', '#1f77b4'], ['MS', '#ff7f0e']]);
[['GFAP', 601.500, ['0', '2', '4', '6', '8'], 38.300], ['SOX9', 809, ['0', '1', '2', '3', '4', '5', '6', '7'], 22]].forEach(([gene, y, labels, step]) => {
  [['Control', 662.500, false], ['MS', 875.500, true]].forEach(([group, x, ms]) => {
    panel(x, y, 161, 173, gene + ' in ' + group, expression(gene, ms));
    colourbar(x + 163.500, y, 173, labels, step);
  });
});

/* Part of the main embedding that shows beside the plugin window */
const r2 = random(3);
let d = '';
for (let i = 0; i < 560; i++) {
  const x = Math.pow(r2(), 1.500) * 33, top = 2 + x * 1.250, bottom = 55 + Math.min(x, 20) * .35;
  const y = top + (r2() + r2() + (x > 15 ? 0 : r2())) / (x > 15 ? 2 : 3) * (bottom - top);
  d += `M${Math.round(x)} ${Math.round(y)}h1v1h-1z`;
}
add(document.getElementById('cells'), 'path', { d, fill: '#6fdcd2', opacity: .75 });

/* Histograms of continuous metadata: bar heights in pixels x 3 */
const histograms = [
  { name: 'n_genes_by_counts', min: '600.0', max: '6992', x: [['2,000', 81], ['4,000', 167], ['6,000', 253.500]], y: [['6,000', 92], ['4,000', 61], ['2,000', 31], ['0', 0]],
    bars: [97, 321, 248, 193, 149, 117, 91, 74, 63, 56, 51, 48, 47, 47, 44, 41, 39, 38, 35, 36, 33, 30, 29, 27, 24, 23, 20, 18, 15, 14, 12, 11, 10, 9, 7, 6, 6, 4, 3, 2] },
  { name: 'log1p_n_genes_by_counts', min: '6.399', max: '8.853', x: [['6.5', 32], ['7', 88], ['7.5', 144], ['8', 200.500], ['8.5', 257]], y: [['2,000', 92], ['1,000', 46], ['0', 0]],
    bars: [3, 21, 96, 216, 294, 321, 318, 291, 279, 273, 269, 237, 237, 214, 199, 186, 168, 161, 147, 141, 135, 135, 130, 139, 150, 144, 144, 151, 142, 150, 142, 135, 126, 127, 102, 89, 72, 54, 38, 23] },
  { name: 'total_counts', min: '1000', max: '3.756e+4', x: [['1e+4', 88.500], ['2e+4', 164], ['3e+4', 239.500]], y: [['2e+4', 92], ['1e+4', 61], ['5e+3', 31], ['0e+0', 0]],
    bars: [321, 138, 71, 48, 39, 33, 29, 24, 21, 19, 17, 14, 12, 11, 9, 8, 7, 6, 5, 5, 4, 4, 3, 3, 2, 2, 2, 1, 1, 1, 1, 1, 1, 1, 0, 0, 0, 0, 0, 0] },
  { name: 'log1p_total_counts', min: '6.909', max: '10.53', x: [['7', 27.500], ['8', 104], ['9', 180], ['10', 256]], y: [['2,000', 77.500], ['1,000', 38.500], ['0', 0]],
    bars: [321, 309, 311, 284, 274, 261, 252, 230, 216, 203, 185, 173, 152, 142, 127, 125, 124, 119, 125, 125, 120, 128, 117, 117, 117, 114, 101, 97, 89, 81, 66, 60, 51, 41, 31, 20, 12, 5, 1, 1] }
];
const list = document.getElementById('histograms');
histograms.forEach(h => {
  const box = document.createElement('div');
  box.className = 'histogram';
  box.innerHTML = '<button class="btn"><svg class="ico"><use href="#tint"/></svg></button><svg class="chart" viewBox="0 0 338 142"></svg>' +
    `<div class="caption"><span>min ${h.min}</span><em>${h.name}</em><span>max ${h.max}</span></div>`;
  list.appendChild(box);
  const svg = box.querySelector('.chart');
  h.bars.forEach((v, i) => add(svg, 'rect', { x: 21 + i * 6.890, y: 121 - v / 3, width: 6, height: v / 3, fill: '#bbb' }));
  h.x.forEach(([t, x]) => add(svg, 'text', { x, y: 140.500, 'text-anchor': 'middle' }, t));
  h.y.forEach(([t, y]) => add(svg, 'text', { x: 305, y: 126 - y }, t));
});
const tail = document.createElement('div');
tail.className = 'histogram';
list.appendChild(tail);
```
